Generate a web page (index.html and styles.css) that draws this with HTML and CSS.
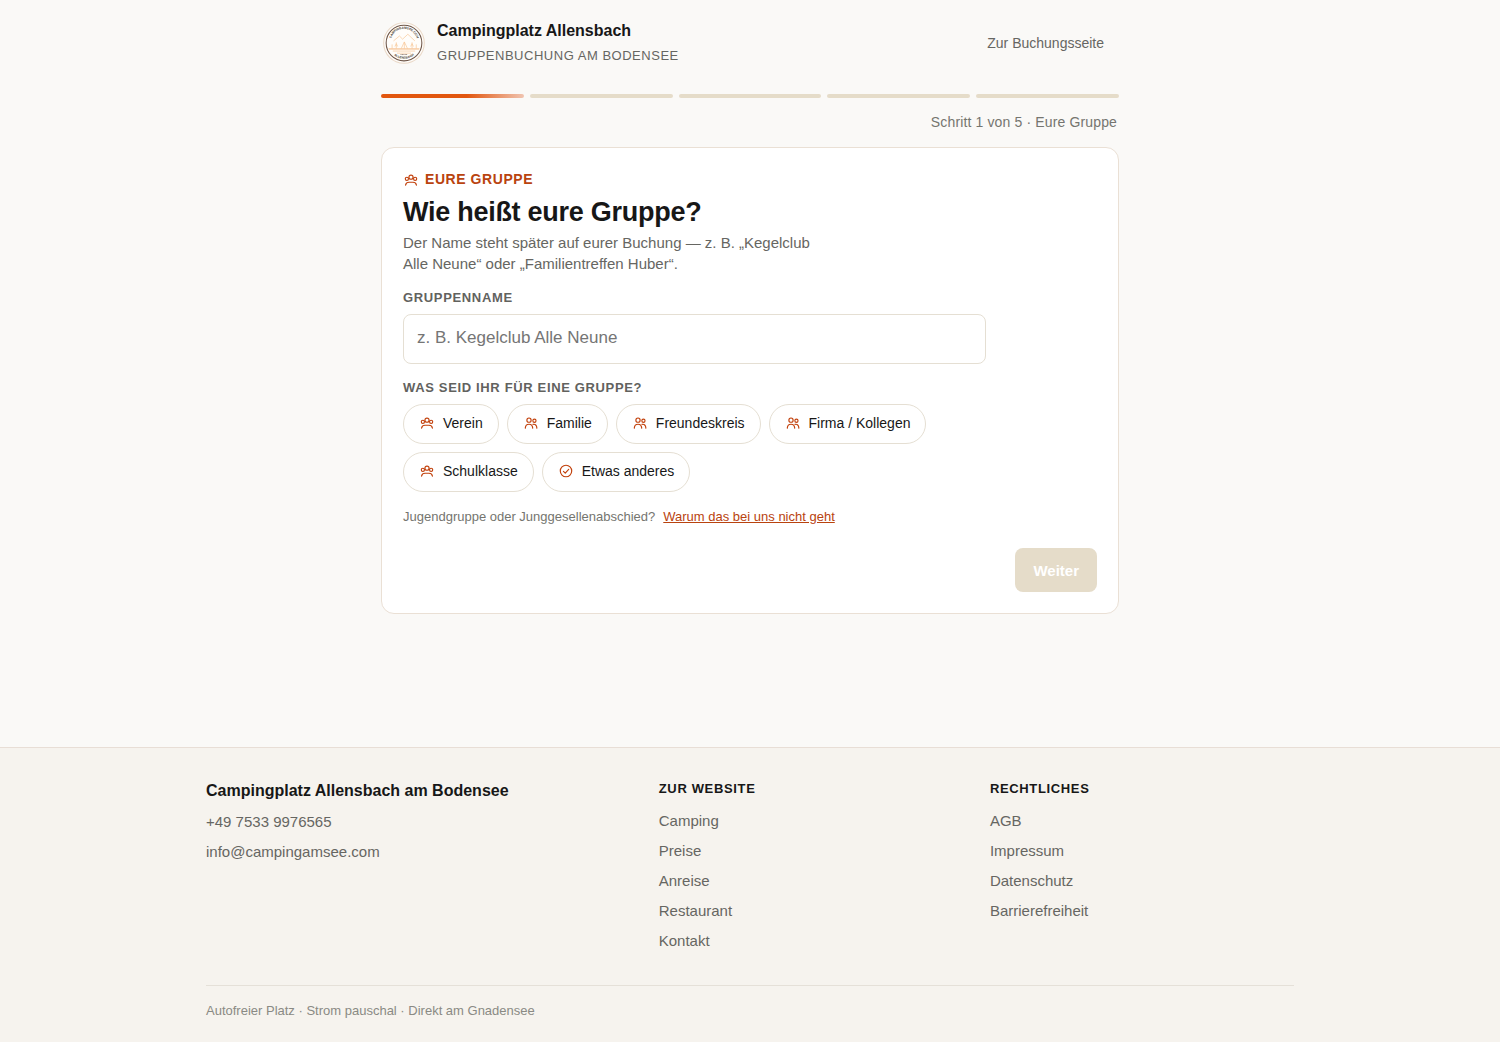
FILE: index.html
```html
<!DOCTYPE html>
<html lang="de">
<head>
  <meta charset="UTF-8">
  <meta name="viewport" content="width=device-width, initial-scale=1.0">
  <title>Gruppenbuchung</title>
  <link rel="stylesheet" href="styles.css">
</head>
<body>
  <svg class="sprite" aria-hidden="true">
    <symbol id="icon-group" viewBox="-2 -2 28 28">
      <circle cx="12" cy="7" r="3.6" />
      <circle cx="4.800" cy="10" r="2.800" />
      <circle cx="19.200" cy="10" r="2.800" />
      <path d="M2.500 21c.6-3.200 2.800-5 6-5h7c3.200 0 5.400 1.800 6 5" />
    </symbol>
    <symbol id="icon-people" viewBox="-2 -2 28 28">
      <circle cx="8.500" cy="7" r="3.700" />
      <circle cx="18" cy="8" r="2.800" />
      <path d="M2 21c.3-4.300 2.700-6.800 6.500-6.800s6.200 2.500 6.500 6.800M15.500 14.500c4-1 6.500 1.500 6.800 6.500" />
    </symbol>
    <symbol id="icon-check" viewBox="-2 -2 28 28">
      <circle cx="12" cy="12" r="10" />
      <path d="M7.500 12.500l3.200 3.200 6-6.700" />
    </symbol>
  </svg>

  <main class="page">
    <header class="header">
      <div class="brand">
        <svg class="logo" viewBox="0 0 120 120" aria-hidden="true">
          <defs>
            <path id="arc-top" d="M23 66a38 38 0 1 1 74 0" />
            <path id="arc-bottom" d="M15 60a45 45 0 0 0 90 0" />
          </defs>
          <circle cx="60" cy="60" r="58" fill="#fffdfa" stroke="#ead9c8" stroke-width="3" />
          <circle cx="60" cy="60" r="51" fill="none" stroke="#6e5648" stroke-width="3" />
          <text class="logo-text"><textPath href="#arc-top" startOffset="50%">CAMPINGAMSEE.COM</textPath></text>
          <text class="logo-text"><textPath href="#arc-bottom" startOffset="50%">ALLENSBACH</textPath></text>
          <g fill="none" stroke="#f8c797" stroke-width="2">
            <path d="M30 54l17-14 9 9 15-14 20 19" />
            <path d="M16 77h88" stroke="#f5b880" stroke-width="3" />
            <path d="M28 83h64M40 89h40" />
            <path d="M52 76l9-19 9 19M61 57v19" />
            <path d="M38 76V58M34 70l4-8 4 8M83 76V58M79 70l4-8 4 8M26 76V64M95 76V64" />
          </g>
          <path d="M50 93h20" stroke="#6e5648" stroke-width="2" stroke-dasharray="3 1" />
        </svg>
        <div>
          <p class="brand-name">Campingplatz Allensbach</p>
          <p class="brand-sub">GRUPPENBUCHUNG AM BODENSEE</p>
        </div>
      </div>
      <a class="header-link" href="#">Zur Buchungsseite</a>
    </header>

    <div class="progress">
      <span class="bar active"></span>
      <span class="bar"></span>
      <span class="bar"></span>
      <span class="bar"></span>
      <span class="bar"></span>
    </div>
    <p class="step">Schritt 1 von 5 · Eure Gruppe</p>

    <form class="card">
      <p class="eyebrow"><svg class="icon"><use href="#icon-group" /></svg>EURE GRUPPE</p>
      <h1>Wie heißt eure Gruppe?</h1>
      <p class="intro">Der Name steht später auf eurer Buchung — z. B. „Kegelclub Alle Neune“ oder „Familientreffen Huber“.</p>

      <div class="fields">
        <label class="label" for="group-name">GRUPPENNAME</label>
        <input class="input" type="text" id="group-name" placeholder="z. B. Kegelclub Alle Neune">

        <p class="label" id="type-label">WAS SEID IHR FÜR EINE GRUPPE?</p>
        <div class="chips" role="group" aria-labelledby="type-label">
          <button class="chip" type="button"><svg class="icon"><use href="#icon-group" /></svg>Verein</button>
          <button class="chip" type="button"><svg class="icon"><use href="#icon-people" /></svg>Familie</button>
          <button class="chip" type="button"><svg class="icon"><use href="#icon-people" /></svg>Freundeskreis</button>
          <button class="chip" type="button"><svg class="icon"><use href="#icon-people" /></svg>Firma / Kollegen</button>
          <button class="chip" type="button"><svg class="icon"><use href="#icon-group" /></svg>Schulklasse</button>
          <button class="chip" type="button"><svg class="icon"><use href="#icon-check" /></svg>Etwas anderes</button>
        </div>
      </div>

      <p class="note">
        <span>Jugendgruppe oder Junggesellenabschied?</span>
        <a href="#">Warum das bei uns nicht geht</a>
      </p>
      <div class="actions">
        <button class="next" type="submit" disabled>Weiter</button>
      </div>
    </form>
  </main>

  <footer class="footer">
    <div class="footer-inner">
      <div class="footer-grid">
        <div>
          <p class="footer-name">Campingplatz Allensbach am Bodensee</p>
          <ul class="links contact">
            <li><a href="tel:+4975339976565">+49 7533 9976565</a></li>
            <li><a href="mailto:info@campingamsee.com">info@campingamsee.com</a></li>
          </ul>
        </div>
        <nav>
          <h2>ZUR WEBSITE</h2>
          <ul class="links">
            <li><a href="#">Camping</a></li>
            <li><a href="#">Preise</a></li>
            <li><a href="#">Anreise</a></li>
            <li><a href="#">Restaurant</a></li>
            <li><a href="#">Kontakt</a></li>
          </ul>
        </nav>
        <nav>
          <h2>RECHTLICHES</h2>
          <ul class="links">
            <li><a href="#">AGB</a></li>
            <li><a href="#">Impressum</a></li>
            <li><a href="#">Datenschutz</a></li>
            <li><a href="#">Barrierefreiheit</a></li>
          </ul>
        </nav>
      </div>
      <p class="footer-bottom">Autofreier Platz · Strom pauschal · Direkt am Gnadensee</p>
    </div>
  </footer>
</body>
</html>
```
FILE: styles.css
```css
* {
  box-sizing: border-box;
  margin: 0;
  padding: 0;
}

body {
  min-height: 100vh;
  display: flex;
  flex-direction: column;
  font-family: "Liberation Sans", Arial, sans-serif;
  font-size: 15px;
  line-height: 21px;
  color: #171717;
  background: #faf9f7;
}

a {
  color: inherit;
  text-decoration: none;
}

.sprite {
  position: absolute;
  width: 0;
  height: 0;
}

.page {
  flex: 1;
  width: 100%;
  max-width: 770px;
  margin: 0 auto;
  padding: 18px 16px 48px;
}

/* header */
.header {
  display: flex;
  align-items: center;
  justify-content: space-between;
  padding: 0 15px 0 2px;
}

.brand {
  display: flex;
  align-items: center;
  gap: 12px;
}

.logo {
  width: 42px;
  height: 42px;
}

.logo-text {
  font-size: 9px;
  font-weight: bold;
  text-anchor: middle;
  fill: #4a3d35;
}

.brand-name {
  font-size: 16px;
  font-weight: bold;
  line-height: 25px;
}

.brand-sub {
  font-size: 13px;
  line-height: 25px;
  letter-spacing: 0.04em;
  color: #666662;
}

.header-link {
  font-size: 14px;
  color: #666662;
}

/* progress */
.progress {
  display: flex;
  gap: 6px;
  margin-top: 26px;
}

.bar {
  flex: 1;
  height: 4px;
  border-radius: 2px;
  background: #e5dcc9;
}

.bar.active {
  background: linear-gradient(90deg, #e2570f 60%, #f0c4b0);
}

.step {
  margin: 14px 0;
  padding-right: 2px;
  text-align: right;
  font-size: 14px;
  letter-spacing: 0.01em;
  color: #75756f;
}

/* card */
.card {
  padding: 21px;
  border: 1px solid #eae0d5;
  border-radius: 13px;
  background: #fff;
}

.icon {
  flex: none;
  width: 16px;
  height: 16px;
  fill: none;
  stroke: #c2410c;
  stroke-width: 2;
  stroke-linecap: round;
  stroke-linejoin: round;
}

.eyebrow {
  display: flex;
  align-items: center;
  gap: 6px;
  font-size: 14px;
  font-weight: bold;
  letter-spacing: 0.04em;
  color: #b9430f;
}

h1 {
  margin: 5px 0 3px;
  font-size: 27px;
  line-height: 34px;
  letter-spacing: -0.01em;
}

.intro {
  max-width: 430px;
  color: #666662;
}

.fields {
  max-width: 583px;
}

.label {
  display: block;
  margin: 16px 0 8px;
  font-size: 13px;
  font-weight: bold;
  line-height: 16px;
  letter-spacing: 0.05em;
  color: #62625e;
}

.input {
  display: block;
  width: 100%;
  height: 50px;
  padding: 0 13px 3px;
  border: 1px solid #e5dfd3;
  border-radius: 8px;
  background: #fff;
  font: inherit;
  font-size: 17px;
}

.input::placeholder {
  color: #757575;
}

.chips {
  display: flex;
  flex-wrap: wrap;
  gap: 8px;
}

.chip {
  display: flex;
  align-items: center;
  gap: 8px;
  height: 40px;
  padding: 0 15px 2px;
  border: 1px solid #e5dfd3;
  border-radius: 20px;
  background: #fff;
  font: inherit;
  font-size: 14px;
  color: #171717;
  cursor: pointer;
}

.note {
  display: flex;
  flex-wrap: wrap;
  gap: 8px;
  margin-top: 14px;
  font-size: 13px;
  color: #75756f;
}

.note a {
  color: #b9430f;
  text-decoration: underline;
}

.actions {
  display: flex;
  justify-content: flex-end;
  margin-top: 21px;
}

.next {
  height: 44px;
  padding: 0 18px;
  border: none;
  border-radius: 8px;
  background: #e5dcc9;
  font: inherit;
  font-weight: bold;
  color: #fff;
}

/* footer */
.footer {
  padding: 32px 16px 21px;
  border-top: 1px solid #e8ded6;
  background: #f6f3ee;
}

.footer-inner {
  max-width: 1088px;
  margin: 0 auto;
}

.footer-grid {
  display: grid;
  grid-template-columns: 1.4fr 1fr 1fr;
  gap: 27px;
  color: #666662;
}

.footer-name {
  font-size: 16px;
  font-weight: bold;
  color: #171717;
}

.footer h2 {
  font-size: 13px;
  line-height: 17px;
  letter-spacing: 0.05em;
  color: #171717;
}

.links {
  display: grid;
  gap: 9px;
  margin-top: 13px;
  list-style: none;
}

.contact {
  margin-top: 10px;
}

.footer-bottom {
  margin-top: 34px;
  padding-top: 14px;
  border-top: 1px solid #e5e0d8;
  font-size: 13px;
  color: #8a8a84;
}
```
